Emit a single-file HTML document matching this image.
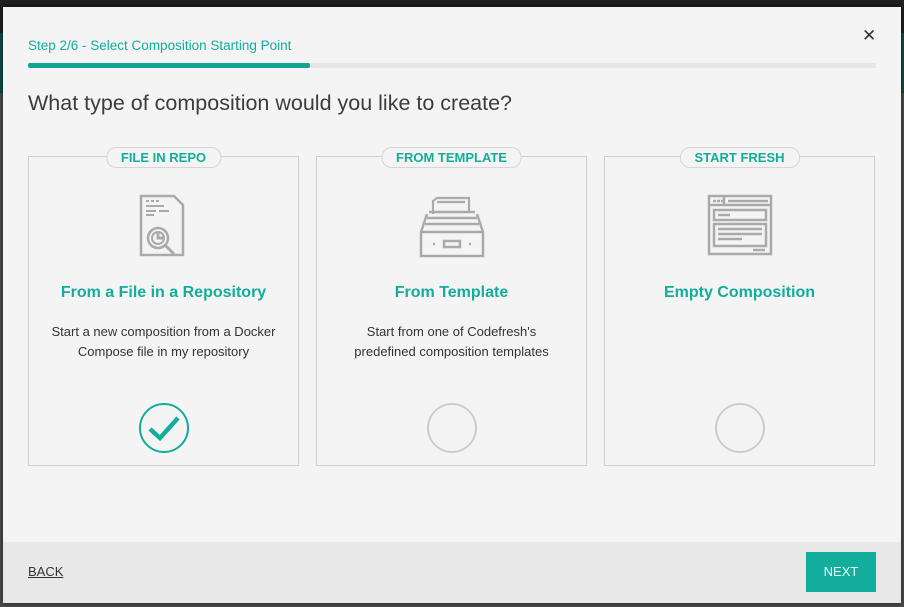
<!DOCTYPE html>
<html><head><style>
*{margin:0;padding:0;box-sizing:border-box}
body{width:904px;height:607px;overflow:hidden;background:#4a4a4a;font-family:"Liberation Sans",sans-serif;position:relative}
.top{position:absolute;left:0;top:0;width:904px;height:33px;background:#1f1f1f;color:#555;font-size:14px}
.teal{position:absolute;left:0;top:33px;width:904px;height:60px;background:#0b4a40}
.modal{position:absolute;left:3px;top:7px;width:898px;height:596px;background:#f4f4f4;box-shadow:0 0 4px rgba(0,0,0,.6)}
.step{position:absolute;left:25px;top:31px;font-size:13.5px;color:#13ad9b}
.x{position:absolute;left:859px;top:19px;font-size:17px;color:#333}
.bar{position:absolute;left:25px;top:56px;width:848px;height:5px;background:#e6e6e6}
.bar div{width:282px;height:5px;background:#12a593;border-radius:2px}
h1{position:absolute;left:25px;top:84px;font-size:21.5px;font-weight:normal;color:#3c3c3c}
.card{position:absolute;top:149px;width:271px;height:310px;border:1px solid #cfcfcf}
.tag{position:absolute;top:-10px;left:50%;transform:translateX(-50%);background:#f4f4f4;border:1px solid #d6d6d6;border-radius:10px;height:21px;padding:0 14px;font-size:13px;font-weight:bold;color:#13ad9b;line-height:19px;white-space:nowrap}
.icon{position:absolute;left:50%;top:37px;transform:translateX(-50%)}
.t{position:absolute;top:127px;width:100%;text-align:center;font-size:16px;font-weight:bold;color:#13ad9b}
.d{position:absolute;top:165px;width:100%;text-align:center;font-size:13px;color:#333;line-height:20px}
.c{position:absolute;left:50%;top:245px;transform:translateX(-50%)}
.foot{position:absolute;left:0;top:535px;width:898px;height:61px;background:#e8e8e8}
.back{position:absolute;left:25px;top:22px;font-size:13px;color:#333;text-decoration:underline}
.next{position:absolute;left:803px;top:10px;width:70px;height:40px;background:#12ad9c;color:#e8fffb;font-size:13px;text-align:center;line-height:40px}
</style></head><body>
<div class="top"></div><div class="teal"></div>
<div class="modal">
<div class="step">Step 2/6 - Select Composition Starting Point</div>
<div class="x">✕</div>
<div class="bar"><div></div></div>
<h1>What type of composition would you like to create?</h1>

<div class="card" style="left:25px"><div class="tag">FILE IN REPO</div>
<svg class="icon" width="50" height="64" viewBox="0 0 50 64" fill="none" stroke="#aaa" stroke-width="2.5"><path d="M2 2h33l9 9v50H2z"/><path d="M7 7h3M12 7h3M17 7h3M7 12h18M7 17h10M20 17h10M7 21h8" stroke-width="2"/><circle cx="19" cy="44" r="10"/><circle cx="19" cy="44" r="6" stroke-width="2"/><path d="M19 38v6h6M26 51l9 9" stroke-width="3"/></svg>
<div class="t">From a File in a Repository</div>
<div class="d">Start a new composition from a Docker<br>Compose file in my repository</div>
<svg class="c" width="52" height="52" viewBox="0 0 52 52" fill="none"><circle cx="26" cy="26" r="24" stroke="#13ad9b" stroke-width="2"/><path d="M12 27l10 9 18-20" stroke="#13ad9b" stroke-width="4.5"/></svg>
</div>

<div class="card" style="left:313px"><div class="tag">FROM TEMPLATE</div>
<svg class="icon" width="66" height="64" viewBox="0 0 66 64" fill="none" stroke="#aaa" stroke-width="2.5"><path d="M14 20V7l4-3h32v14M18 8h28" stroke-width="2.2"/><path d="M10 18h46M8 24h50M6 30h54M2 38l6-18M64 38l-6-18M2 38h62v24H2zM25 47h16v6H25zM14 50h2M50 50h2" stroke-width="2.5"/></svg>
<div class="t">From Template</div>
<div class="d">Start from one of Codefresh's<br>predefined composition templates</div>
<svg class="c" width="52" height="52" viewBox="0 0 52 52" fill="none"><circle cx="26" cy="26" r="24" stroke="#ccc" stroke-width="2"/></svg>
</div>

<div class="card" style="left:601px"><div class="tag">START FRESH</div>
<svg class="icon" width="66" height="64" viewBox="0 0 66 64" fill="none" stroke="#aaa" stroke-width="2.5"><path d="M2 2h62v58H2zM2 11h62M17 2v9M6 7h3M10 7h3M14 7h2M21 7h40M7 16h52v10H7zM7 30h52v22H7zM11 21h12M11 35h44M11 40h44M11 45h24M46 56h12" stroke-width="2.5"/></svg>
<div class="t">Empty Composition</div>
<svg class="c" width="52" height="52" viewBox="0 0 52 52" fill="none"><circle cx="26" cy="26" r="24" stroke="#ccc" stroke-width="2"/></svg>
</div>

<div class="foot"><div class="back">BACK</div><div class="next">NEXT</div></div>
</div>
</body></html>
